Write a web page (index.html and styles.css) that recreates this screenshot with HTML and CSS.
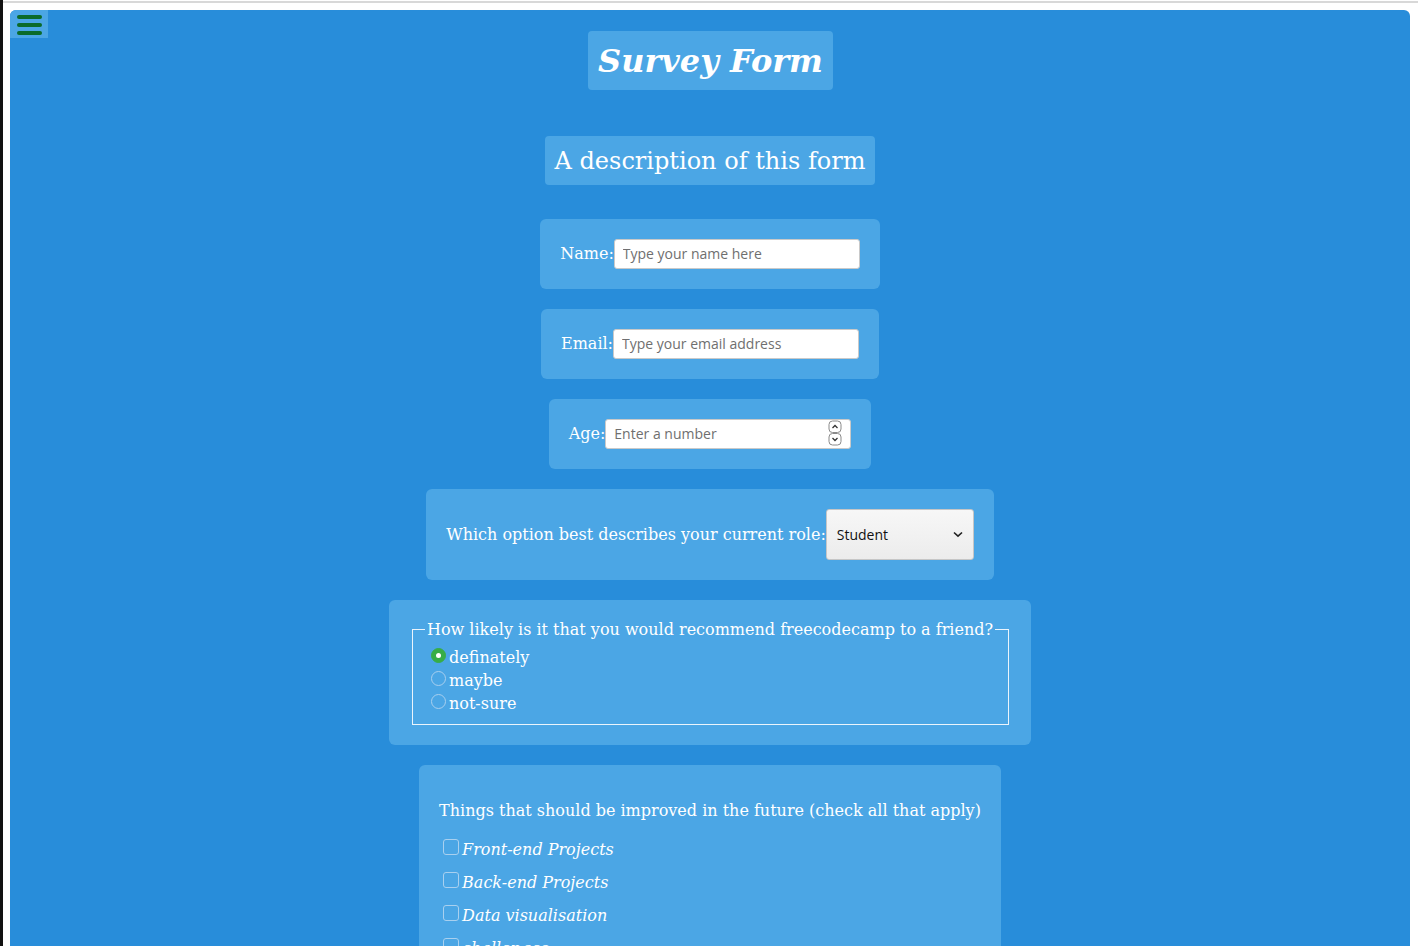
FILE: index.html
```html
<!DOCTYPE html>
<html lang="en">
<head>
<meta charset="utf-8">
<title>Survey Form</title>
<link rel="stylesheet" href="styles.css">
</head>
<body>
<div class="page">
  <main class="survey">
    <button class="menu-btn" aria-label="menu">
      <span class="bar"></span><span class="bar"></span><span class="bar"></span>
    </button>
    <h1 class="title">Survey Form</h1>
    <p class="description">A description of this form</p>
    <form class="form">
      <div class="card">
        <label class="field-label" for="name">Name:</label>
        <input class="text-input" id="name" type="text" placeholder="Type your name here">
      </div>
      <div class="card">
        <label class="field-label" for="email">Email:</label>
        <input class="text-input" id="email" type="email" placeholder="Type your email address">
      </div>
      <div class="card">
        <label class="field-label" for="age">Age:</label>
        <span class="number-wrap">
          <input class="text-input number-input" id="age" type="number" placeholder="Enter a number">
          <svg class="spinner" width="14" height="26" viewBox="0 0 14 26">
            <rect x="1" y="1" width="12" height="11.5" rx="3.5" fill="#fff" stroke="#8a8a8a"/>
            <rect x="1" y="13.5" width="12" height="11.5" rx="3.5" fill="#fff" stroke="#8a8a8a"/>
            <path d="M4.5 8 L7 5.5 L9.5 8" fill="none" stroke="#333" stroke-width="1.3"/>
            <path d="M4.5 18 L7 20.5 L9.5 18" fill="none" stroke="#333" stroke-width="1.3"/>
          </svg>
        </span>
      </div>
      <div class="card">
        <label class="field-label field-label-role" for="role">Which option best describes your current role:</label>
        <span class="select-wrap">
          <select class="select" id="role">
            <option>Student</option>
            <option>Full time job</option>
            <option>Full time learner</option>
            <option>Prefer not to say</option>
            <option>Other</option>
          </select>
          <svg class="chevron" width="10" height="7" viewBox="0 0 10 7">
            <path d="M1 1.5 L5 5.2 L9 1.5" fill="none" stroke="#222" stroke-width="1.6"/>
          </svg>
        </span>
      </div>
      <div class="card">
        <fieldset class="radio-set">
          <legend class="legend">How likely is it that you would recommend freecodecamp to a friend?</legend>
          <label class="radio-row"><input class="radio" type="radio" name="rec" checked>definately</label>
          <label class="radio-row"><input class="radio" type="radio" name="rec">maybe</label>
          <label class="radio-row"><input class="radio" type="radio" name="rec">not-sure</label>
        </fieldset>
      </div>
      <div class="card card-checks">
        <p class="checks-title">Things that should be improved in the future (check all that apply)</p>
        <label class="check-row"><input class="check" type="checkbox">Front-end Projects</label>
        <label class="check-row"><input class="check" type="checkbox">Back-end Projects</label>
        <label class="check-row"><input class="check" type="checkbox">Data visualisation</label>
        <label class="check-row"><input class="check" type="checkbox">challenges</label>
        <label class="check-row"><input class="check" type="checkbox">Open source community</label>
      </div>
    </form>
  </main>
</div>
</body>
</html>
```

FILE: styles.css
```css
html, body {
  overflow: hidden;
}
body {
  margin: 0;
  padding-top: 1px;
  border-left: 3px solid #111;
  background: #fff;
  font-family: "DejaVu Serif", serif;
  font-size: 16px;
  color: #fff;
}
.page {
  border-top: 2px solid #d8d8d8;
  padding: 7px 8px 0 7px;
}
.survey {
  position: relative;
  background: #288dda;
  border-radius: 6px 6px 0 0;
  min-height: 1200px;
  display: flex;
  flex-direction: column;
  align-items: center;
  padding-top: 21px;
}
.menu-btn {
  position: absolute;
  top: 0;
  left: 0;
  width: 38px;
  height: 28px;
  padding: 5px 0 0 7px;
  border: none;
  border-radius: 6px 0 0 0;
  background: #4ba6e5;
  display: flex;
  flex-direction: column;
  gap: 4px;
  align-items: flex-start;
}
.bar {
  display: block;
  width: 25px;
  height: 4px;
  border-radius: 2px;
  background: #0b6b2a;
}
.title {
  margin: 0 0 0 1px;
  background: #4ba6e5;
  border-radius: 4px;
  padding: 11px 10px 9px 10px;
  font-size: 32px;
  line-height: 39px;
  font-weight: bold;
  font-style: italic;
}
.description {
  margin: 46px 0 0;
  background: #4ba6e5;
  border-radius: 4px;
  padding: 11px 10px 9px;
  font-size: 24px;
  line-height: 29px;
}
.form {
  margin-top: 34px;
  display: flex;
  flex-direction: column;
  align-items: center;
  gap: 20px;
}
.card {
  background: #4ba6e5;
  border-radius: 6px;
  padding: 20px;
  display: flex;
  align-items: center;
}
.field-label {
  line-height: 19px;
  margin-bottom: 2px;
}
.field-label-role {
  margin-bottom: 0;
}
.text-input {
  box-sizing: border-box;
  width: 246px;
  height: 30px;
  margin: 0;
  padding: 0 8px 2px;
  border: 1px solid #c9c9c9;
  border-radius: 3px;
  background: #fff;
  font-family: "Open Sans", "Noto Sans", sans-serif;
  font-size: 14px;
  color: #333;
}
.text-input::placeholder {
  color: #6f6f6f;
}
.number-wrap {
  position: relative;
  display: inline-block;
}
.number-input {
  -moz-appearance: textfield;
  display: block;
}
.number-input::-webkit-inner-spin-button,
.number-input::-webkit-outer-spin-button {
  -webkit-appearance: none;
  margin: 0;
}
.spinner {
  position: absolute;
  right: 9px;
  top: 1px;
}
.select-wrap {
  position: relative;
  display: inline-block;
}
.select {
  -webkit-appearance: none;
  appearance: none;
  display: block;
  box-sizing: border-box;
  width: 148px;
  height: 51px;
  margin: 0;
  padding: 0 10px;
  border: 1px solid #c6c6c6;
  border-radius: 3px;
  background: linear-gradient(#f7f7f7, #ececec);
  font-family: "Open Sans", "Noto Sans", sans-serif;
  font-size: 14px;
  color: #111;
}
.chevron {
  position: absolute;
  right: 11px;
  top: 22px;
  pointer-events: none;
}
.radio-set {
  width: 571px;
  margin: 0 2px 0 3px;
  padding: 7px 12px 9px;
  border: 1px solid #eaf4fc;
  text-align: left;
}
.legend {
  padding: 0 2px;
  line-height: 19px;
}
.radio-row {
  display: flex;
  align-items: center;
  height: 23px;
  line-height: 19px;
}
.radio {
  -webkit-appearance: none;
  appearance: none;
  box-sizing: border-box;
  width: 15px;
  height: 15px;
  margin: 0 3px 4px 6px;
  border: 1px solid #a9d0ef;
  border-radius: 50%;
  background: transparent;
  position: relative;
}
.radio:checked {
  background: #37ad46;
  border-color: #37ad46;
}
.radio:checked::after {
  content: "";
  position: absolute;
  left: 4px;
  top: 4px;
  width: 5px;
  height: 5px;
  border-radius: 50%;
  background: #fff;
}
.card-checks {
  flex-direction: column;
  align-items: flex-start;
}
.checks-title {
  margin: 16px 0 13px;
  line-height: 19px;
}
.check-row {
  display: flex;
  align-items: center;
  height: 33px;
  font-style: italic;
  line-height: 19px;
}
.check {
  -webkit-appearance: none;
  appearance: none;
  box-sizing: border-box;
  width: 16px;
  height: 16px;
  margin: 0 3px 6px 4px;
  border: 1px solid #a9d0ef;
  border-radius: 3px;
  background: transparent;
}
```
